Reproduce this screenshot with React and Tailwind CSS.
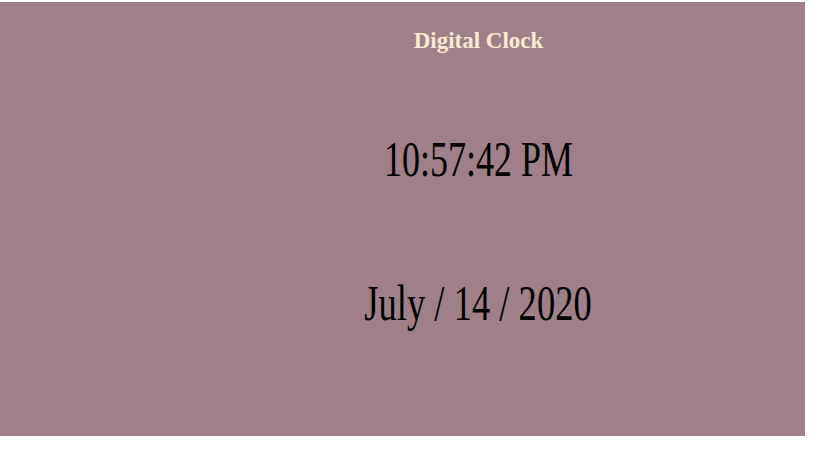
export default function App() {
  const serif = { fontFamily: '"Liberation Serif", "Times New Roman", serif' };

  return (
    <div className="min-h-[460px] w-[819px] bg-white pt-[2px]">
      <div className="flex h-[434px] w-[805px] flex-col items-center bg-[#a08088] pl-[152px] pt-[27px]" style={serif}>
        <h1 className="text-[23px] font-bold leading-none text-[#fcebd2]">Digital Clock</h1>
        <div className="mt-[89px] scale-y-[1.38] text-[36px] leading-none text-black">10:57:42 PM</div>
        <div className="mt-[108px] scale-x-[1.015] scale-y-[1.38] text-[36px] leading-none text-black">July / 14 / 2020</div>
      </div>
    </div>
  );
}
